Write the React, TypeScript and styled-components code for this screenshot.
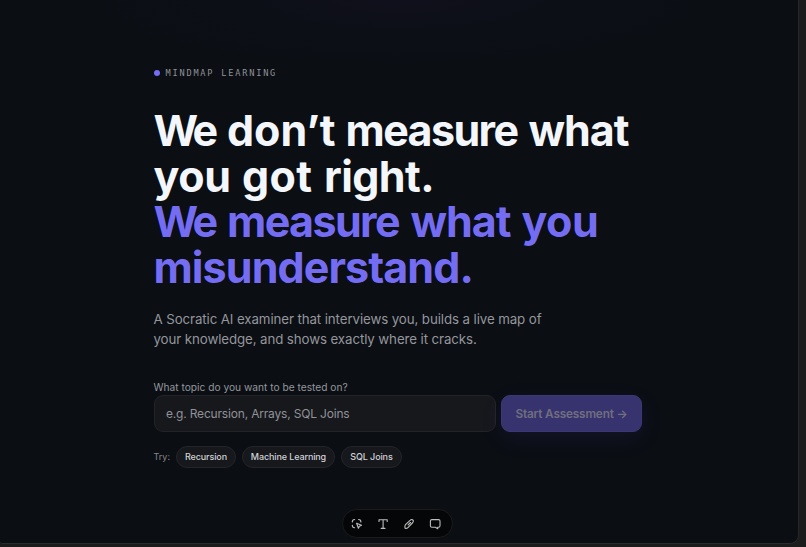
import { useState } from 'react';
import styled, { createGlobalStyle } from 'styled-components';

const GlobalStyle = createGlobalStyle`
  * { box-sizing: border-box; }
  body {
    margin: 0;
    background: #1c1c1e;
    font-family: Inter, "Liberation Sans", sans-serif;
    overflow: hidden;
  }
`;

const Screen = styled.div`
  width: 806px;
  height: 547px;
  padding: 0 7px 3px 0;
  background: #1c1c1d;
`;

const Page = styled.main`
  position: relative;
  height: 544px;
  padding: 67px 0 0 153.5px;
  border-right: 1px solid #242628;
  border-bottom: 1px solid #292b2d;
  border-radius: 0 0 9px 3px;
  background: radial-gradient(ellipse 330px 70px at 400px 0, #0f101b 0%, #0b0e13 100%) #0b0e13;
`;

const Eyebrow = styled.div`
  display: flex;
  align-items: center;
  height: 12px;
  gap: 5.5px;
  color: #909298;
  font-family: "DejaVu Sans Mono", monospace;
  font-size: 8.6px;
  letter-spacing: 1.8px;
`;

const Dot = styled.span`
  width: 6.5px;
  height: 6.5px;
  border-radius: 50%;
  background: #746df5;
`;

const Title = styled.h1`
  margin: 29px 0 0;
  font-size: 43px;
  font-weight: 700;
  line-height: 45.7px;
`;

const Line = styled.span<{ $accent?: boolean }>`
  display: flex;
  white-space: pre;
  color: ${({ $accent }) => ($accent ? '#746df3' : '#f3f6fb')};
`;

const Word = styled.span<{ $width: number; $spacing: number }>`
  flex: none;
  width: ${({ $width }) => $width}px;
  letter-spacing: ${({ $spacing }) => $spacing}px;
`;

const Lead = styled.p`
  margin: 18px 0 0;
  color: #94969c;
  font-size: 13.3px;
  letter-spacing: -0.1px;
  line-height: 20.5px;
`;

const Label = styled.label`
  display: block;
  margin-top: 29px;
  color: #94969c;
  font-size: 10.2px;
  line-height: 16px;
`;

const Form = styled.form`
  display: flex;
  gap: 5.5px;
`;

const Input = styled.input`
  width: 342px;
  height: 37px;
  padding: 0 11.5px;
  border: 1px solid #222328;
  border-radius: 9px;
  outline: none;
  background: #17181c;
  color: #f3f6fb;
  font: 400 12px Inter, sans-serif;
  letter-spacing: -0.18px;

  &::placeholder {
    color: #909299;
    opacity: 1;
  }
`;

const StartButton = styled.button`
  width: 141px;
  height: 37px;
  padding: 1px 0 0;
  border: 1px solid #3c3877;
  border-radius: 9px;
  background: #37336e;
  box-shadow: 0 7px 22px rgba(91, 82, 220, 0.1);
  color: #706e80;
  font: 600 11.8px Inter, sans-serif;
  letter-spacing: -0.18px;
  white-space: nowrap;
`;

const Suggestions = styled.div`
  display: flex;
  align-items: center;
  gap: 6px;
  margin-top: 14px;
  color: #85878d;
  font-size: 9px;
`;

const Chip = styled.button<{ $width: number }>`
  width: ${({ $width }) => $width}px;
  height: 22px;
  padding: 0;
  border: 1px solid #23252a;
  border-radius: 11px;
  background: #17181c;
  color: #d0d2d7;
  font: 500 9px Inter, sans-serif;
  letter-spacing: -0.12px;
`;

const Toolbar = styled.div`
  position: absolute;
  bottom: 5px;
  left: 342px;
  display: flex;
  align-items: center;
  gap: 12px;
  width: 111px;
  height: 29px;
  padding: 0 7px;
  border: 1px solid #1c1b1a;
  border-radius: 15px;
  background: #050608;
`;

const Tool = styled.button`
  display: flex;
  width: 14px;
  height: 14px;
  padding: 0;
  border: 0;
  background: none;
  color: #bdbdbd;
`;

const iconProps = {
  width: 14,
  height: 14,
  viewBox: '0 0 14 14',
  fill: 'none',
  stroke: 'currentColor',
  strokeWidth: 1.1,
  strokeLinecap: 'round' as const,
  strokeLinejoin: 'round' as const,
};

const SelectIcon = () => (
  <svg {...iconProps}>
    <path d="M2.3 4.9c0-1.4 1-2.4 2.3-2.4M8.6 2.5c1.3 0 2.3 1 2.3 2.4M2.3 8.3c0 1.5 1 2.5 2.3 2.5" />
    <path d="m6.6 6.3 4.9 1.9-2.1 1-1 2.1z" />
  </svg>
);

const TextIcon = () => (
  <svg {...iconProps}>
    <path d="M3 4.5V2.7h8.2v1.8M7.1 2.7v8.7M5.2 11.4H9" />
  </svg>
);

const PenIcon = () => (
  <svg {...iconProps}>
    <path d="m3.5 7.6 4.8-4.5c.8-.8 1.9-.8 2.6-.1.7.7.6 1.7-.1 2.5l-4.6 4.8c-.9.9-2.1 1.2-3.2.9-.3-1.3-.3-2.7.5-3.6zM6.1 7.9l2.4-2.4" />
  </svg>
);

const CommentIcon = () => (
  <svg {...iconProps}>
    <path d="M3.9 2.6h6.6c.9 0 1.5.6 1.5 1.5v4.7c0 .9-.6 1.5-1.5 1.5H9.7v1.4L7.4 10.3H3.9c-.9 0-1.5-.6-1.5-1.5V4.1c0-.9.6-1.5 1.5-1.5z" />
  </svg>
);

const topics = [
  { name: 'Recursion', width: 60 },
  { name: 'Machine Learning', width: 93 },
  { name: 'SQL Joins', width: 61 },
];

export default function App() {
  const [topic, setTopic] = useState('');

  return (
    <>
      <GlobalStyle />
      <Screen>
        <Page>
          <Eyebrow><Dot />MINDMAP LEARNING</Eyebrow>
          <Title>
            <Line>
              <Word $width={73.5} $spacing={-3.5}>We</Word>
              <Word $width={118.5} $spacing={0}>don’t</Word>
              <Word $width={183} $spacing={-1.6}>measure</Word>
              <Word $width={110} $spacing={-1}>what</Word>
            </Line>
            <Line>
              <Word $width={88.5} $spacing={-0.4}>you</Word>
              <Word $width={82} $spacing={0.3}>got</Word>
              <Word $width={120} $spacing={-0.6}>right.</Word>
            </Line>
            <Line $accent>
              <Word $width={73.5} $spacing={-3.5}>We</Word>
              <Word $width={183.5} $spacing={-1.6}>measure</Word>
              <Word $width={111} $spacing={-1}>what</Word>
              <Word $width={90} $spacing={-0.5}>you</Word>
            </Line>
            <Line $accent>
              <Word $width={330} $spacing={-0.9}>misunderstand.</Word>
            </Line>
          </Title>
          <Lead>
            A Socratic AI examiner that interviews you, builds a live map of<br />
            your knowledge, and shows exactly where it cracks.
          </Lead>
          <Label htmlFor="topic">What topic do you want to be tested on?</Label>
          <Form onSubmit={(e) => e.preventDefault()}>
            <Input
              id="topic"
              value={topic}
              onChange={(e) => setTopic(e.target.value)}
              placeholder="e.g. Recursion, Arrays, SQL Joins"
            />
            <StartButton>Start Assessment →</StartButton>
          </Form>
          <Suggestions>
            Try:
            {topics.map((t) => (
              <Chip key={t.name} $width={t.width} onClick={() => setTopic(t.name)}>{t.name}</Chip>
            ))}
          </Suggestions>
          <Toolbar>
            <Tool><SelectIcon /></Tool>
            <Tool><TextIcon /></Tool>
            <Tool><PenIcon /></Tool>
            <Tool><CommentIcon /></Tool>
          </Toolbar>
        </Page>
      </Screen>
    </>
  );
}
